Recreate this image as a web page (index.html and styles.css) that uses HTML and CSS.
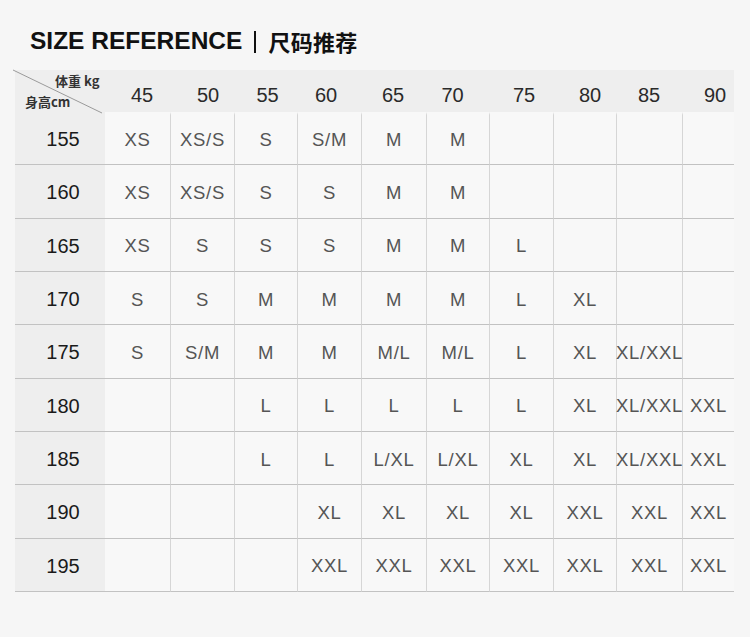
FILE: index.html
```html
<!DOCTYPE html>
<html lang="zh">
<head>
<meta charset="utf-8">
<title>Size Reference</title>
<link rel="stylesheet" href="styles.css">
</head>
<body>
<div class="page">
  <h1 class="title"><span class="en">SIZE REFERENCE</span><span class="bar"></span><span class="zh">尺码推荐</span></h1>
  <div class="table">
    <div class="cell corner">
      <svg class="diag" width="92" height="46" viewBox="0 0 92 46"><line x1="0" y1="1" x2="89" y2="44" stroke="#9a9a9a" stroke-width="1"/></svg>
      <span class="w">体重 kg</span>
      <span class="h">身高cm</span>
    </div>
    <div class="cell head">45</div><div class="cell head">50</div><div class="cell head">55</div><div class="cell head">60</div><div class="cell head">65</div><div class="cell head">70</div><div class="cell head">75</div><div class="cell head">80</div><div class="cell head">85</div><div class="cell head">90</div>

    <div class="cell label">155</div>
    <div class="cell d first">XS</div><div class="cell d first">XS/S</div><div class="cell d first">S</div><div class="cell d first">S/M</div><div class="cell d first">M</div><div class="cell d first">M</div><div class="cell d first"></div><div class="cell d first"></div><div class="cell d first"></div><div class="cell d first last"></div>

    <div class="cell label">160</div>
    <div class="cell d">XS</div><div class="cell d">XS/S</div><div class="cell d">S</div><div class="cell d">S</div><div class="cell d">M</div><div class="cell d">M</div><div class="cell d"></div><div class="cell d"></div><div class="cell d"></div><div class="cell d last"></div>

    <div class="cell label">165</div>
    <div class="cell d">XS</div><div class="cell d">S</div><div class="cell d">S</div><div class="cell d">S</div><div class="cell d">M</div><div class="cell d">M</div><div class="cell d">L</div><div class="cell d"></div><div class="cell d"></div><div class="cell d last"></div>

    <div class="cell label">170</div>
    <div class="cell d">S</div><div class="cell d">S</div><div class="cell d">M</div><div class="cell d">M</div><div class="cell d">M</div><div class="cell d">M</div><div class="cell d">L</div><div class="cell d">XL</div><div class="cell d"></div><div class="cell d last"></div>

    <div class="cell label">175</div>
    <div class="cell d">S</div><div class="cell d">S/M</div><div class="cell d">M</div><div class="cell d">M</div><div class="cell d">M/L</div><div class="cell d">M/L</div><div class="cell d">L</div><div class="cell d">XL</div><div class="cell d">XL/XXL</div><div class="cell d last"></div>

    <div class="cell label">180</div>
    <div class="cell d"></div><div class="cell d"></div><div class="cell d">L</div><div class="cell d">L</div><div class="cell d">L</div><div class="cell d">L</div><div class="cell d">L</div><div class="cell d">XL</div><div class="cell d">XL/XXL</div><div class="cell d last">XXL</div>

    <div class="cell label">185</div>
    <div class="cell d"></div><div class="cell d"></div><div class="cell d">L</div><div class="cell d">L</div><div class="cell d">L/XL</div><div class="cell d">L/XL</div><div class="cell d">XL</div><div class="cell d">XL</div><div class="cell d">XL/XXL</div><div class="cell d last">XXL</div>

    <div class="cell label">190</div>
    <div class="cell d"></div><div class="cell d"></div><div class="cell d"></div><div class="cell d">XL</div><div class="cell d">XL</div><div class="cell d">XL</div><div class="cell d">XL</div><div class="cell d">XXL</div><div class="cell d">XXL</div><div class="cell d last">XXL</div>

    <div class="cell label">195</div>
    <div class="cell d"></div><div class="cell d"></div><div class="cell d"></div><div class="cell d">XXL</div><div class="cell d">XXL</div><div class="cell d">XXL</div><div class="cell d">XXL</div><div class="cell d">XXL</div><div class="cell d">XXL</div><div class="cell d last">XXL</div>
  </div>
</div>
</body>
</html>
```
FILE: styles.css
```css
html, body {
  margin: 0;
  padding: 0;
  background: #f6f6f6;
}
body {
  font-family: "Liberation Sans", Arial, "Noto Sans CJK SC", sans-serif;
  width: 750px;
  height: 637px;
  overflow: hidden;
}
.page {
  padding: 26px 0 0 15px;
}
.title {
  margin: 0 0 14px 15px;
  display: flex;
  align-items: center;
  height: 30px;
  font-size: 24.5px;
  font-weight: 700;
  color: #111;
  line-height: 30px;
}
.title .bar {
  width: 2px;
  height: 22px;
  background: #111;
  margin: 2px 12px 0 12px;
}
.title .zh {
  font-family: "Noto Sans CJK SC", sans-serif;
  font-size: 22px;
  font-weight: 700;
  letter-spacing: 0.3px;
}
.table {
  display: grid;
  grid-template-columns: 90px 66px 64px 63px 64px 65px 63px 64px 63px 66px 51px;
  grid-template-rows: 42px repeat(9, 53.33px);
  width: 719px;
}
.cell {
  box-sizing: border-box;
  display: flex;
  align-items: center;
  justify-content: center;
}
.head {
  background: #eeeeee;
  font-size: 20px;
  color: #2a2a2a;
  padding-top: 8px;
}
.head:nth-child(2) { padding-left: 8px; }
.head:nth-child(3) { padding-left: 10px; }
.head:nth-child(4) { padding-left: 2px; }
.head:nth-child(5) { padding-right: 8px; }
.head:nth-child(6) { padding-right: 3px; }
.head:nth-child(7) { padding-right: 12px; }
.head:nth-child(8) { padding-left: 4px; }
.head:nth-child(9) { padding-left: 9px; }
.head:nth-child(10) { padding-right: 2px; }
.head:nth-child(11) { padding-left: 13px; }
.corner {
  background: #eeeeee;
  position: relative;
}
.corner .diag {
  position: absolute;
  left: -2px;
  top: -1px;
}
.corner .w {
  position: absolute;
  left: 40px;
  top: 1px;
  font-size: 13px;
  color: #333;
  font-family: "Noto Sans CJK SC", sans-serif;
  font-weight: 700;
}
.corner .h {
  position: absolute;
  left: 10px;
  top: 22px;
  font-size: 13px;
  color: #333;
  font-family: "Noto Sans CJK SC", sans-serif;
  font-weight: 700;
}
.label {
  background: #eeeeee;
  font-size: 20px;
  color: #1a1a1a;
  border-bottom: 1px solid #c2c2c2;
  padding: 3px 0 0 6px;
}
.d {
  background: #f8f8f8;
  font-size: 18.5px;
  letter-spacing: 0.7px;
  color: #555555;
  border-bottom: 1px solid #c2c2c2;
  border-right: 1px solid #d6d6d6;
  padding-top: 3px;
}
.d.last {
  border-right: none;
}
.d.first {
  border-top: 3px solid #f8f8f8;
  padding-top: 0;
}
```
